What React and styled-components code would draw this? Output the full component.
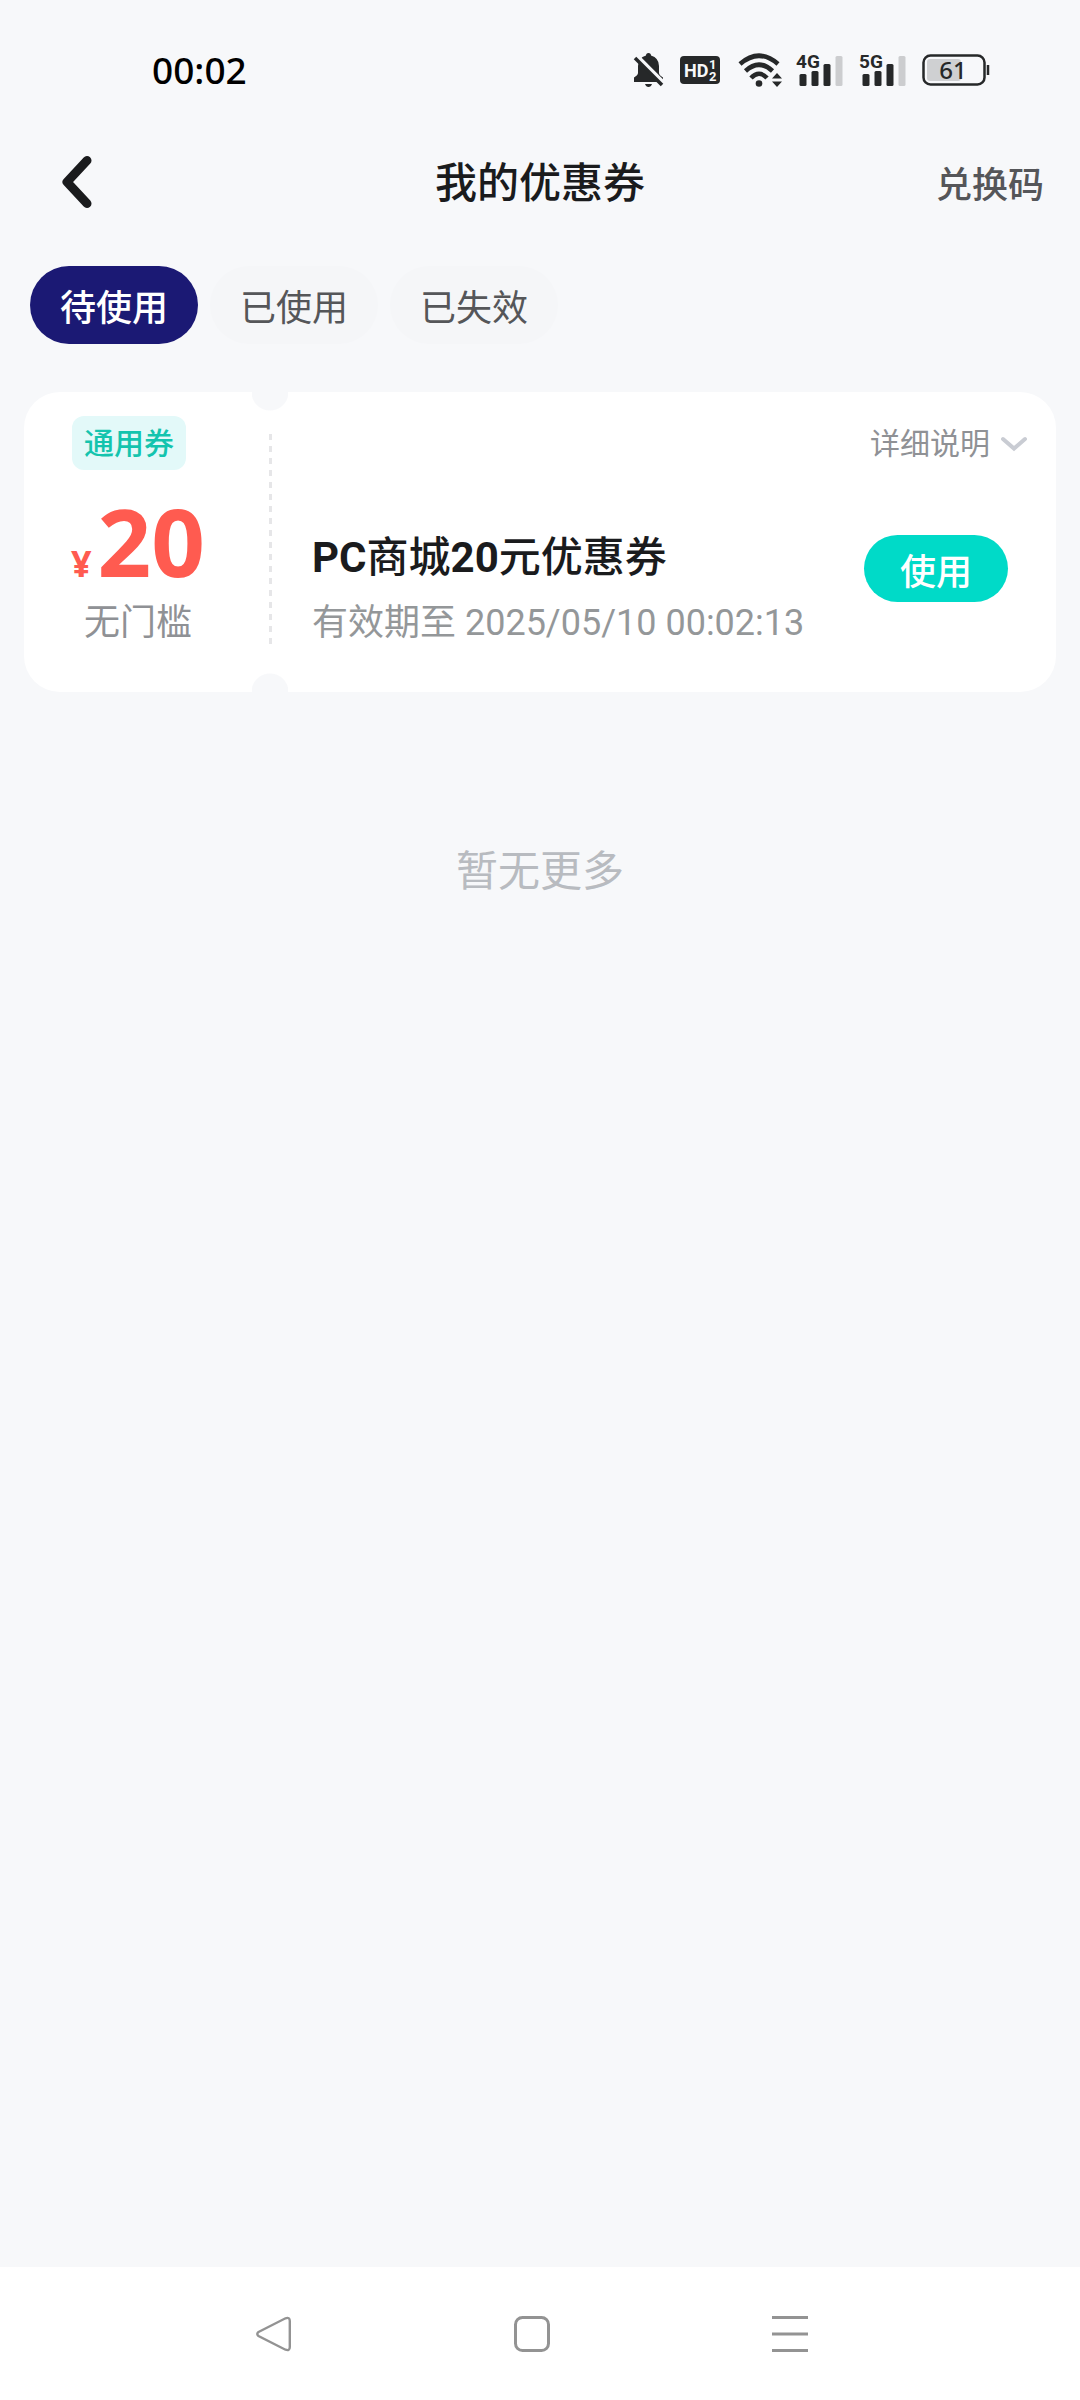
import { useState } from 'react';
import styled, { createGlobalStyle, css, ThemeProvider } from 'styled-components';

const theme = {
  colors: {
    background: '#f7f8fa',
    white: '#ffffff',
    black: '#1a1b1d',
    gray1: '#555659',
    gray2: '#8f9195',
    gray3: '#b8bbc0',
    gray4: '#c9ccd3',
    line: '#e6e6e8',
    navy: '#1b1974',
    mint: '#00dac8',
    mintText: '#14c4ae',
    mintLight: '#e3f9f9',
    red: '#ff5b50',
  },
};

const TABS = ['待使用', '已使用', '已失效'];

function Signal({ label }) {
  return (
    <svg width="47" height="50" viewBox="0 -8 47 50" role="img" aria-label={label}>
      <SignalLabel x="0" y="15">
        {label}
      </SignalLabel>
      <g fill="#262829">
        <rect x="3.500" y="21" width="7" height="12" rx="1.500" />
        <rect x="15.500" y="18" width="7" height="15" rx="1.500" />
        <rect x="27.500" y="11" width="7" height="22" rx="1.500" />
      </g>
      <rect x="39.500" y="3" width="7" height="30" rx="1.500" fill="#cccdcf" />
    </svg>
  );
}

function MutedBell() {
  return (
    <svg width="31" height="36" viewBox="0 0 31 36" aria-hidden="true">
      <path
        fill="#262829"
        d="M13 3.500 Q13 1 15.500 1 Q18 1 18 3.500 Q26 6 26 14 V21 Q26 23 30 25.500 V30 H1 V25.500 Q5 23 5 21 V14 Q5 6 13 3.500Z M12 32 H19 Q18 35 15.500 35 Q13 35 12 32Z"
      />
      <path d="M3 3 L31 31" stroke="#f7f8fa" strokeWidth="4" />
      <path d="M2 6 L29 33" stroke="#262829" strokeWidth="3.500" />
    </svg>
  );
}

function HdBadge() {
  return (
    <svg width="40" height="28" viewBox="0 0 40 28" role="img" aria-label="HD">
      <rect width="40" height="28" rx="4" fill="#262829" />
      <HdText x="4" y="21" $size={18}>
        HD
      </HdText>
      <HdText x="29" y="13" $size={13}>
        1
      </HdText>
      <HdText x="29" y="25" $size={13}>
        2
      </HdText>
    </svg>
  );
}

function Wifi() {
  return (
    <svg width="44" height="34" viewBox="-4 0 44 34" overflow="visible" aria-hidden="true">
      <g fill="none" stroke="#262829" strokeWidth="4.600">
        <path d="M0 11 Q19 -5.500 38 11" />
        <path d="M5.500 18 Q19 5.500 32.500 18" />
        <path d="M11 25 Q19 16.500 27 25" />
      </g>
      <circle cx="19" cy="30.500" r="3.300" fill="#262829" />
      <path fill="#262829" d="M32 25.500 L37 20 L42 25.500Z M32 28.500 H42 L37 34Z" />
    </svg>
  );
}

function Battery() {
  return (
    <svg width="68" height="48" viewBox="0 -8 68 48" role="img" aria-label="61%">
      <rect x="1.500" y="1.500" width="61" height="29" rx="7" fill="none" stroke="#262829" strokeWidth="2.500" />
      <rect x="5" y="5" width="34" height="22" rx="3" fill="#cfd0d2" />
      <path d="M66 11 V21" stroke="#262829" strokeWidth="2.500" />
      <BatteryText x="31" y="25">
        61
      </BatteryText>
    </svg>
  );
}

function StatusBar() {
  return (
    <StatusBarWrapper>
      <Clock>00:02</Clock>
      <StatusIcons>
        <MutedBell />
        <HdBadge />
        <Wifi />
        <Signal label="4G" />
        <Signal label="5G" />
        <Battery />
      </StatusIcons>
    </StatusBarWrapper>
  );
}

function Coupon() {
  return (
    <CouponCard>
      <PricePane>
        <CouponTag>通用券</CouponTag>
        <Price>
          <Currency>¥</Currency>20
        </Price>
        <Condition>无门槛</Condition>
      </PricePane>
      <Divider />
      <InfoPane>
        <DetailButton type="button">
          详细说明
          <svg width="28" height="16" viewBox="0 0 28 16" aria-hidden="true">
            <path d="M3 3 L14 12.500 L25 3" fill="none" stroke="#c9ccd3" strokeWidth="4" strokeLinecap="round" />
          </svg>
        </DetailButton>
        <InfoRow>
          <div>
            <CouponTitle>
              <b>PC</b>商城<b>20</b>元优惠券
            </CouponTitle>
            <Expiry>有效期至 2025/05/10 00:02:13</Expiry>
          </div>
          <UseButton type="button">使用</UseButton>
        </InfoRow>
      </InfoPane>
    </CouponCard>
  );
}

export default function App() {
  const [selectedTab, setSelectedTab] = useState(TABS[0]);

  return (
    <ThemeProvider theme={theme}>
      <GlobalStyle />
      <Root>
        <StatusBar />
        <Header>
          <BackButton type="button" aria-label="返回">
            <svg width="30" height="54" viewBox="0 0 30 54" aria-hidden="true">
              <path
                d="M25 5.500 L5 27 L25 48.500"
                fill="none"
                stroke="#1a1b1d"
                strokeWidth="9"
                strokeLinecap="round"
                strokeLinejoin="round"
              />
            </svg>
          </BackButton>
          <Title>我的优惠券</Title>
          <RedeemLink href="#redeem">兑换码</RedeemLink>
        </Header>
        <TabList>
          {TABS.map((tab) => (
            <Tab key={tab} type="button" $isSelected={tab === selectedTab} onClick={() => setSelectedTab(tab)}>
              {tab}
            </Tab>
          ))}
        </TabList>
        <main>
          <Coupon />
          <NoMore>暂无更多</NoMore>
        </main>
        <SystemNav>
          <NavButton type="button" aria-label="后退">
            <svg width="36" height="36" viewBox="0 0 36 36" aria-hidden="true">
              <path
                d="M2.500 16 L29.500 2.300 Q33.800 0.800 33.800 5 V31 Q33.800 35.200 29.500 33.700 L2.500 20 Q0 18 2.500 16Z"
                fill="none"
                stroke="#939393"
                strokeWidth="2.400"
              />
            </svg>
          </NavButton>
          <NavButton type="button" aria-label="主页">
            <svg width="36" height="36" viewBox="0 0 36 36" aria-hidden="true">
              <rect x="1.500" y="1.500" width="33" height="33" rx="7" fill="none" stroke="#939393" strokeWidth="3" />
            </svg>
          </NavButton>
          <NavButton type="button" aria-label="菜单">
            <svg width="36" height="36" viewBox="0 0 36 36" aria-hidden="true">
              <path d="M0 1.500 H36 M0 18 H36 M0 34.500 H36" stroke="#939393" strokeWidth="3" />
            </svg>
          </NavButton>
        </SystemNav>
      </Root>
    </ThemeProvider>
  );
}

const GlobalStyle = createGlobalStyle`
  * {
    box-sizing: border-box;
    margin: 0;
    padding: 0;
  }

  body {
    background-color: ${theme.colors.background};
    font-family: Roboto, 'Noto Sans CJK SC', sans-serif;
  }

  button {
    border: none;
    background: none;
    font-family: inherit;
    cursor: pointer;
  }

  svg {
    display: block;
    flex-shrink: 0;
  }
`;

const Root = styled.div`
  display: flex;
  flex-direction: column;

  min-height: 100vh;
`;

const StatusBarWrapper = styled.div`
  display: flex;
  justify-content: space-between;
  align-items: center;

  height: 140px;
  padding: 0 90px 0 152px;
`;

const Clock = styled.time`
  padding-bottom: 2px;

  color: #000000;
  font: 500 37px 'Noto Sans', sans-serif;
`;

const StatusIcons = styled.div`
  display: flex;
  align-items: center;
  gap: 16px;
`;

const SignalLabel = styled.text`
  fill: #262829;
  font: 700 19px Roboto, sans-serif;
`;

const HdText = styled.text`
  fill: ${({ theme }) => theme.colors.background};
  font: 700 ${({ $size }) => $size}px Roboto, sans-serif;
`;

const BatteryText = styled.text`
  fill: #262829;
  font: 500 24px 'Noto Sans', sans-serif;
  text-anchor: middle;
`;

const Header = styled.header`
  display: grid;
  grid-template-columns: 1fr auto 1fr;
  align-items: center;

  height: 84px;
  padding: 0 36px;
`;

const BackButton = styled.button`
  justify-self: start;

  padding: 0 26px;
`;

const Title = styled.h1`
  padding-bottom: 6px;

  color: ${({ theme }) => theme.colors.black};
  font-size: 42px;
  font-weight: 500;
`;

const RedeemLink = styled.a`
  justify-self: end;

  color: ${({ theme }) => theme.colors.gray1};
  font-size: 36px;
  font-weight: 500;
  text-decoration: none;
`;

const TabList = styled.nav`
  display: flex;
  gap: 12px;

  margin-top: 42px;
  padding: 0 30px;
`;

const Tab = styled.button`
  height: 78px;
  padding: 0 30px;
  border-radius: 39px;

  background-color: #f5f6f8;
  color: ${({ theme }) => theme.colors.gray1};
  font-size: 36px;

  ${({ $isSelected, theme }) =>
    $isSelected &&
    css`
      background-color: ${theme.colors.navy};
      color: ${theme.colors.white};
      font-weight: 500;
    `}
`;

const CouponCard = styled.article`
  display: flex;

  min-height: 300px;
  margin: 48px 24px 0;
  border-radius: 36px;
  overflow: hidden;

  background-color: ${({ theme }) => theme.colors.white};
`;

const PricePane = styled.div`
  display: flex;
  flex-direction: column;
  align-items: center;

  width: 228px;
  padding-top: 24px;
`;

const CouponTag = styled.span`
  align-self: flex-start;

  margin-left: 48px;
  padding: 2px 12px 0;
  border-radius: 12px;

  background-color: ${({ theme }) => theme.colors.mintLight};
  color: ${({ theme }) => theme.colors.mintText};
  font-size: 30px;
  font-weight: 500;
  line-height: 52px;
`;

const Price = styled.p`
  display: flex;
  align-items: baseline;
  gap: 6px;

  margin-top: 39px;

  color: ${({ theme }) => theme.colors.red};
  font: 700 94px/64px 'Noto Sans', sans-serif;
`;

const Currency = styled.span`
  font-size: 36px;
`;

const Condition = styled.p`
  color: ${({ theme }) => theme.colors.gray2};
  font-size: 36px;
  line-height: 54px;
`;

const Divider = styled.div`
  position: relative;

  width: 36px;

  /* dashed tear line */
  &::before {
    content: '';
    position: absolute;
    top: 42px;
    bottom: 48px;
    left: 17px;
    width: 3px;
    background: repeating-linear-gradient(${({ theme }) => theme.colors.line} 0 6px, transparent 6px 12px);
  }

  /* notches */
  background:
    radial-gradient(circle at 50% 0, ${({ theme }) => theme.colors.background} 18px, transparent 19px),
    radial-gradient(circle at 50% 100%, ${({ theme }) => theme.colors.background} 18px, transparent 19px);
`;

const InfoPane = styled.div`
  flex: 1;
  display: flex;
  flex-direction: column;

  padding: 24px 0 0 24px;
`;

const DetailButton = styled.button`
  display: flex;
  align-items: center;
  align-self: flex-end;
  gap: 10px;

  margin-right: 28px;

  color: ${({ theme }) => theme.colors.gray2};
  font-size: 30px;
  line-height: 56px;
`;

const InfoRow = styled.div`
  display: flex;
  justify-content: space-between;
  align-items: flex-start;

  margin-top: 56px;
  padding-right: 48px;
`;

const CouponTitle = styled.h2`
  color: ${({ theme }) => theme.colors.black};
  font-size: 42px;
  font-weight: 500;
  line-height: 60px;

  b {
    font-weight: 700;
  }
`;

const Expiry = styled.p`
  margin-top: 8px;

  color: #949799;
  font-size: 36px;
  line-height: 54px;
`;

const UseButton = styled.button`
  height: 67px;
  margin-top: 7px;
  padding: 0 36px;
  border-radius: 34px;

  background-color: ${({ theme }) => theme.colors.mint};
  color: ${({ theme }) => theme.colors.white};
  font-size: 36px;
  font-weight: 500;
`;

const NoMore = styled.p`
  margin-top: 150px;

  color: ${({ theme }) => theme.colors.gray3};
  font-size: 42px;
  line-height: 60px;
  text-align: center;
`;

const SystemNav = styled.footer`
  display: flex;
  justify-content: center;
  align-items: center;
  gap: 222px;

  height: 133px;
  margin-top: auto;
  padding-right: 16px;

  background-color: ${({ theme }) => theme.colors.white};
`;

const NavButton = styled.button`
  width: 36px;
  height: 36px;
`;
